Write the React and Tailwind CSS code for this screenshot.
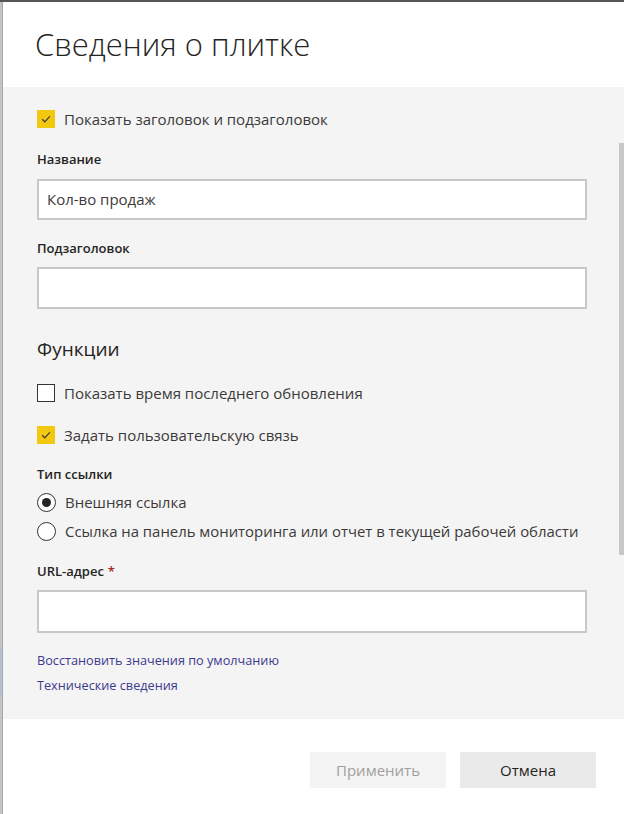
import React from "react";

const font = { fontFamily: '"Open Sans", "Noto Sans", sans-serif' };

function Check({ checked }) {
  return checked ? (
    <div className="w-[18px] h-[18px] bg-[#f2c811] flex items-center justify-center shrink-0">
      <svg width="12" height="12" viewBox="0 0 12 12">
        <path d="M2.2 6.3 L4.8 8.8 L9.8 3.4" fill="none" stroke="#3b3a39" strokeWidth="1.2" />
      </svg>
    </div>
  ) : (
    <div className="w-[18px] h-[18px] bg-white border border-[#333333] shrink-0" />
  );
}

function Radio({ checked }) {
  return (
    <div className="w-[19px] h-[19px] rounded-full bg-white border border-[#333333] flex items-center justify-center shrink-0">
      {checked && <div className="w-[9px] h-[9px] rounded-full bg-[#252423]" />}
    </div>
  );
}

function Row({ children, className = "" }) {
  return <div className={"h-[24px] flex items-center gap-[9px] " + className}>{children}</div>;
}

export default function App() {
  return (
    <div className="w-[624px] h-[814px] bg-[#c8c8c8] flex flex-col overflow-hidden" style={font}>
      <div className="h-[2px] bg-[#555555] shrink-0" />
      <div className="flex flex-1">
        <div className="w-[3px] bg-[#c4c4c4] border-r border-[#a8a8a8] shrink-0 relative">
          <div className="absolute left-0 top-[645px] w-[2px] h-[50px] bg-[#b6bfd2]" />
        </div>
        <div className="flex-1 bg-white flex flex-col text-[#252423]">
          <div className="h-[85px] shrink-0 pl-[32px] pt-[23px]">
            <div className="text-[31px] leading-[38px] font-light text-[#252423]">Сведения о плитке</div>
          </div>
          <div className="h-[632px] bg-[#f4f4f4] relative pl-[34px] pr-[37px] pt-[20px]">
            <div className="absolute right-0 top-[56px] w-[5px] h-[412px] bg-[#c8c8c8]" />
            <Row>
              <Check checked />
              <span className="text-[15px] text-[#3b3a39]">Показать заголовок и подзаголовок</span>
            </Row>
            <div className="mt-[19px] h-[20px] flex items-center text-[13px] font-semibold">Название</div>
            <div className="mt-[9px] h-[41px] bg-white border-2 border-[#c8c8c8] flex items-center pl-[8px] text-[15px] text-[#3b3a39]">
              Кол-во продаж
            </div>
            <div className="mt-[19px] h-[20px] flex items-center text-[13px] font-semibold">Подзаголовок</div>
            <div className="mt-[8px] h-[42px] bg-white border-2 border-[#c8c8c8]" />
            <div className="mt-[26px] h-[28px] flex items-center text-[19px] text-[#252423]">Функции</div>
            <Row className="mt-[18px]">
              <Check />
              <span className="text-[15px] text-[#3b3a39]">Показать время последнего обновления</span>
            </Row>
            <Row className="mt-[18px]">
              <Check checked />
              <span className="text-[15px] text-[#3b3a39]">Задать пользовательскую связь</span>
            </Row>
            <div className="mt-[18px] h-[20px] flex items-center text-[13px] font-semibold">Тип ссылки</div>
            <Row className="mt-[5px]">
              <Radio checked />
              <span className="text-[15px] text-[#3b3a39]">Внешняя ссылка</span>
            </Row>
            <Row className="mt-[5px]">
              <Radio />
              <span className="text-[14.9px] text-[#3b3a39]">Ссылка на панель мониторинга или отчет в текущей рабочей области</span>
            </Row>
            <div className="mt-[19px] h-[20px] flex items-center text-[13px] font-semibold">
              URL-адрес <span className="text-[#a4262c] ml-[4px]">*</span>
            </div>
            <div className="mt-[8px] h-[43px] bg-white border-2 border-[#c8c8c8]" />
            <div className="mt-[18px] h-[20px] flex items-center text-[12.7px] text-[#3b3a8f]">Восстановить значения по умолчанию</div>
            <div className="mt-[5px] h-[20px] flex items-center text-[12.7px] text-[#3b3a8f]">Технические сведения</div>
          </div>
          <div className="flex-1 flex justify-end items-start pt-[33px] pr-[28px] gap-[14px]">
            <div className="w-[136px] h-[36px] bg-[#f4f4f4] flex items-center justify-center text-[15px] text-[#a19f9d]">Применить</div>
            <div className="w-[136px] h-[36px] bg-[#eaeaea] flex items-center justify-center text-[15px] text-[#252423]">Отмена</div>
          </div>
        </div>
      </div>
    </div>
  );
}
